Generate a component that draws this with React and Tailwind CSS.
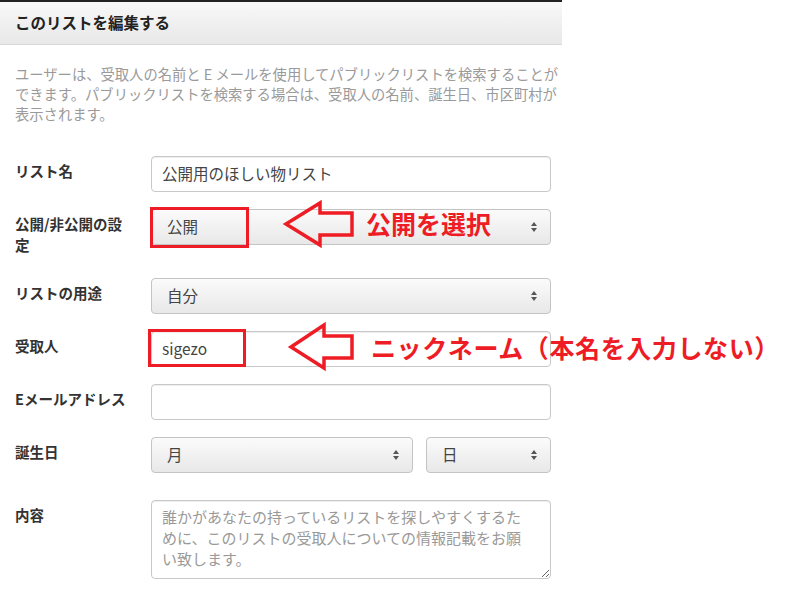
import React from "react";

function SelectArrows() {
  return (
    <svg width="8" height="12" viewBox="0 0 8 12" className="shrink-0">
      <polygon points="4,1 7,5 1,5" fill="#555" />
      <polygon points="1,7 7,7 4,11" fill="#555" />
    </svg>
  );
}

function Row({ label, children, className = "" }) {
  return (
    <div className={"flex items-start " + className}>
      <div className="w-[136px] shrink-0 pr-[16px] pt-[4px] text-[14.5px] leading-[21px] font-bold text-[#333]">
        {label}
      </div>
      <div className="w-[400px] shrink-0">{children}</div>
    </div>
  );
}

function TextInput({ value }) {
  return (
    <div className="h-[36px] flex items-center px-[10px] bg-white border border-[#c8c8c8] rounded-[4px] shadow-[inset_0_1px_1px_rgba(0,0,0,0.075)] text-[15.5px] text-[#444]">
      {value}
    </div>
  );
}

function FakeSelect({ value, className = "" }) {
  return (
    <div
      className={
        "h-[36px] flex items-center justify-between pl-[15px] pr-[12px] border border-[#c4c4c4] rounded-[4px] bg-linear-to-b from-[#fbfbfb] to-[#e8e8e8] text-[15.5px] text-[#444] " +
        className
      }
    >
      <span>{value}</span>
      <SelectArrows />
    </div>
  );
}

export default function App() {
  return (
    <div className="relative w-[800px] h-[590px] bg-white overflow-hidden font-['Noto_Sans_CJK_JP','Noto_Sans',sans-serif]">
      <div className="w-[562px] overflow-hidden">
        <div className="h-[2px] bg-[#222]" />
        <div className="h-[43px] flex items-center px-[15px] bg-linear-to-b from-[#f8f8f8] to-[#e8e8e8] border-b border-[#d8d8d8]">
          <span className="text-[15.5px] font-bold text-[#222]">このリストを編集する</span>
        </div>
        <div className="px-[15px] pt-[19px]">
          <p className="text-[14.3px] leading-[20px] text-[#9a9a9a] whitespace-nowrap">
            ユーザーは、受取人の名前と E メールを使用してパブリックリストを検索することが
            <br />
            できます。パブリックリストを検索する場合は、受取人の名前、誕生日、市区町村が
            <br />
            表示されます。
          </p>
          <div className="mt-[32px] flex flex-col">
            <Row label="リスト名" className="mb-[17px]">
              <TextInput value="公開用のほしい物リスト" />
            </Row>
            <Row label="公開/非公開の設定" className="mb-[23px]">
              <FakeSelect value="公開" />
            </Row>
            <Row label="リストの用途" className="mb-[17px]">
              <FakeSelect value="自分" />
            </Row>
            <Row label="受取人" className="mb-[17px]">
              <TextInput value="sigezo" />
            </Row>
            <Row label="Eメールアドレス" className="mb-[17px]">
              <TextInput value="" />
            </Row>
            <Row label="誕生日" className="mb-[27px]">
              <div className="flex gap-[13px]">
                <FakeSelect value="月" className="w-[262px]" />
                <FakeSelect value="日" className="flex-1" />
              </div>
            </Row>
            <Row label="内容">
              <textarea
                className="block w-[400px] h-[79px] px-[10px] py-[5px] bg-white border border-[#c8c8c8] rounded-[4px] shadow-[inset_0_1px_1px_rgba(0,0,0,0.075)] text-[15px] leading-[21px] text-[#444] placeholder:text-[#999] overflow-hidden"
                placeholder={"誰かがあなたの持っているリストを探しやすくするた\nめに、このリストの受取人についての情報記載をお願\nい致します。"}
              />
            </Row>
          </div>
        </div>
      </div>

      {/* annotations */}
      <div className="absolute left-[150px] top-[207px] w-[99px] h-[41px] border-[3px] border-[#ee1c25]" />
      <div className="absolute left-[148px] top-[329px] w-[98px] h-[38px] border-[3px] border-[#ee1c25]" />
      <svg className="absolute left-0 top-0 pointer-events-none" width="800" height="590">
        <polygon
          points="286,224 320,203 320,213 352,213 352,235 320,235 320,245"
          fill="none"
          stroke="#ee1c25"
          strokeWidth="3.5"
          strokeLinejoin="miter"
        />
        <polygon
          points="291,347 324,325 324,336 352,336 352,358 324,358 324,368"
          fill="none"
          stroke="#ee1c25"
          strokeWidth="3.5"
          strokeLinejoin="miter"
        />
      </svg>
      <div className="absolute left-[366px] top-[208px] text-[25px] leading-[30px] font-bold text-[#ee1c25] whitespace-nowrap">
        公開を選択
      </div>
      <div className="absolute left-[371px] top-[332px] text-[25px] leading-[30px] font-bold tracking-[0.6px] text-[#ee1c25] whitespace-nowrap">
        ニックネーム（本名を入力しない）
      </div>
    </div>
  );
}
